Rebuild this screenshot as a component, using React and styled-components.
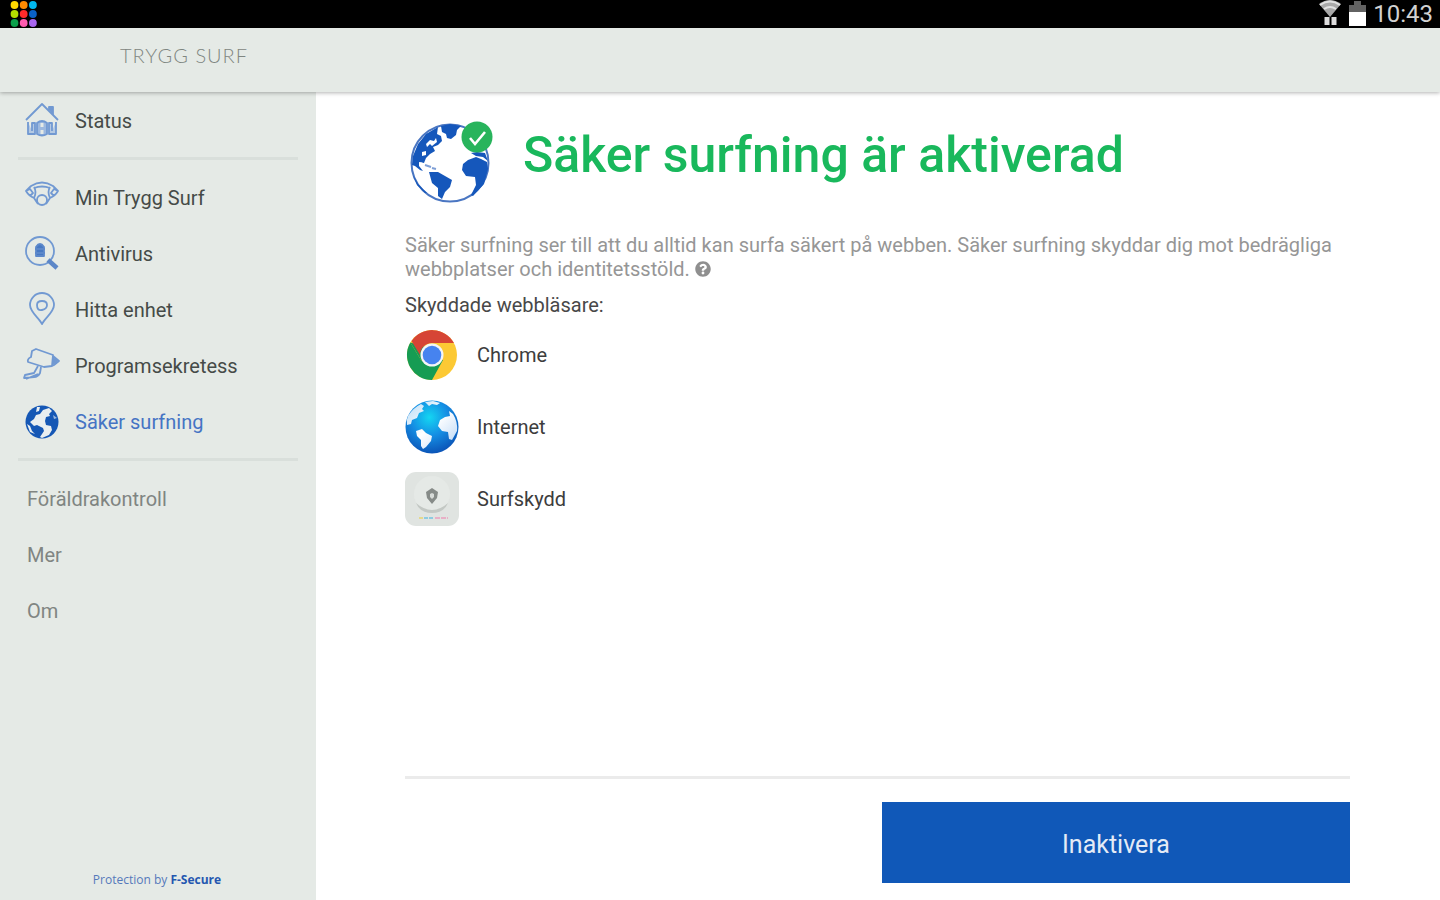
import React from "react";
import styled, { createGlobalStyle } from "styled-components";
import { FaQuestionCircle } from "react-icons/fa";

const GlobalStyle = createGlobalStyle`
  * { box-sizing: border-box; }
  body { margin: 0; font-family: Roboto, "Liberation Sans", sans-serif; color: #3c4240; background: #fff; }
  ul { list-style: none; margin: 0; padding: 0; }
  h1, h2, p { margin: 0; }
`;

const Screen = styled.div`
  display: flex;
  flex-direction: column;
  min-height: 100vh;
`;
const StatusBar = styled.div`
  display: flex;
  align-items: center;
  justify-content: space-between;
  height: 28px;
  padding: 0 7px 0 10px;
  background: #000;
`;
const StatusGroup = styled.div`
  display: flex;
  align-items: center;
  gap: 7px;
  color: #d2d2d2;
  font-size: 24px;
  line-height: 28px;
`;
const Header = styled.header`
  display: flex;
  z-index: 1;
  height: 64px;
  padding: 13px 120px;
  background: #e5eae6;
  box-shadow: 0 1px 4px rgba(0, 0, 0, 0.3);
`;
const Brand = styled.span`
  font-family: Lato, sans-serif;
  font-weight: 300;
  font-size: 20px;
  line-height: 28px;
  letter-spacing: 1px;
  color: #7f8681;
`;
const Body = styled.div`
  display: flex;
  flex: 1;
`;
const Sidebar = styled.nav`
  display: flex;
  flex-direction: column;
  flex: 0 0 316px;
  padding: 1px 18px 12px;
  background: #e5eae6;
`;
const NavList = styled.ul`
  & + & {
    margin-top: 8px;
    padding-top: 10px;
    border-top: 3px solid #d9dfdb;
  }
`;
const NavLink = styled.a`
  display: flex;
  align-items: center;
  gap: 14px;
  height: 56px;
  padding-left: ${(p) => (p.$plain ? 9 : 5)}px;
  font-size: 20px;
  line-height: 28px;
  text-decoration: none;
  color: ${(p) => (p.$active ? "#4574c4" : p.$plain ? "#808582" : "#454b48")};
  svg { flex: none; overflow: visible; }
`;
const Credit = styled.p`
  margin-top: auto;
  padding-right: 2px;
  text-align: center;
  font-family: "Open Sans", sans-serif;
  font-size: 12px;
  line-height: 16px;
  color: #5579bb;
  b { color: #2457b0; }
`;
const Main = styled.main`
  display: flex;
  flex-direction: column;
  flex: 1;
  min-width: 0;
  padding: 29px 90px 17px 89px;
`;
const TitleRow = styled.div`
  display: flex;
  gap: 29px;
  padding-left: 5px;
  svg { flex: none; }
`;
const Title = styled.h1`
  font-size: 50px;
  line-height: 68px;
  font-weight: 500;
  color: #19b85c;
`;
const Intro = styled.p`
  margin-top: 28px;
  font-size: 20px;
  line-height: 24px;
  color: #969696;
`;
const HelpButton = styled.button`
  width: 16px;
  height: 16px;
  padding: 0;
  border: 0;
  background: none;
  color: #8f8f8f;
  vertical-align: -1px;
  svg { display: block; }
`;
const ListHeading = styled.h2`
  margin-top: 10px;
  font-size: 20px;
  line-height: 28px;
  font-weight: 400;
  color: #484848;
`;
const BrowserRow = styled.li`
  display: flex;
  align-items: center;
  gap: 18px;
  height: 72px;
  font-size: 20px;
  color: #3d3d3d;
`;
const Footer = styled.footer`
  display: flex;
  justify-content: flex-end;
  margin-top: auto;
  padding-top: 23px;
  border-top: 3px solid #ebebeb;
`;
const Action = styled.button`
  width: 468px;
  max-width: 100%;
  height: 81px;
  padding: 4px 0 0;
  border: 0;
  background: #1058b8;
  color: #e4ebf6;
  font: 400 25px/32px Roboto, sans-serif;
`;

const DOTS = ["#ffd800", "#ff8a00", "#00b8f0", "#b4e000", "#ff2a2a", "#0a62c8", "#0aa04a", "#ff5cb0", "#a866f0"];

const AppDots = () => (
  <svg width="28" height="28" aria-hidden="true">
    {DOTS.map((c, i) => (
      <circle key={c} cx={4.5 + (i % 3) * 9.2} cy={5 + Math.floor(i / 3) * 9} r="3.9" fill={c} />
    ))}
  </svg>
);
const Wifi = () => (
  <svg width="24" height="28" aria-hidden="true">
    <path d="M1 4Q12-4 23 4L12 17Z" fill="#a9a9a9" />
    <path d="M2 5Q12-2 22 5M6 9Q12 5 18 9" fill="none" stroke="#e2e2e2" strokeWidth="2" />
    <path d="M9 25V17M16 25V17" stroke="#ddd" strokeWidth="5" />
  </svg>
);
const Battery = () => (
  <svg width="17" height="28" aria-hidden="true">
    <path d="M5 1h7v4h5v21H0V5h5z" fill="#626262" />
    <path d="M0 12h17v14H0z" fill="#fff" />
  </svg>
);

const Line = ({ children }) => (
  <svg width="38" height="36" viewBox="0 0 38 36" fill="none" stroke="#7199d2" strokeWidth="1.8" strokeLinejoin="round" aria-hidden="true">
    {children}
  </svg>
);
const HouseIcon = () => (
  <Line>
    <path d="M3 17 19 1 35 17" />
    <path d="M26 7V4h4v8" fill="#7199d2" />
    <path d="M5 19v12h7V20H9v8M33 19v12h-7V20h3v8" fill="#b4c9e3" />
    <path d="M14 20q5-4 10 0v11q-5 3-10 0z" fill="#9db9df" />
    <path d="M19 20v4M19 27v4" stroke="#e5eae6" strokeWidth="3" />
  </Line>
);
const ShieldIcon = () => (
  <Line>
    <path d="M8 6Q19-1 30 6l5 5q-3 5-8 7l-4 6M8 6l-5 5q3 5 8 7l4 6M11 7q3 5 0 11M27 7q-3 5 0 11M11 8q8-3 16 0M3 11l4-2 3 4-3 3M35 11l-4-2-3 4 3 3" />
    <circle cx="19" cy="20" r="5" />
  </Line>
);
const ScanIcon = () => (
  <Line>
    <circle cx="17" cy="15" r="14" />
    <path d="M13 20V11q4-6 8 0v9z" fill="#4779c3" stroke="#5c88ca" />
    <path d="M12 13h10M12 17h10" stroke="#5c88ca" />
    <path d="m25 24 9 8" strokeWidth="4.5" stroke="#5c87c8" />
  </Line>
);
const PinIcon = () => (
  <Line>
    <path d="M19 32C16 26 7 20 7 13a12 12 0 0 1 24 0c0 7-9 13-12 19z" />
    <path d="M14 13q0-4 5-4t5 4-5 5-5-5z" />
  </Line>
);
const CameraIcon = () => (
  <Line>
    <path d="m9 3 4-2 17 6-1 11-8 1-16-5q-1-3 3-5zM30 8l6 5-5 4-2 1" />
    <path d="m30 10 4 3-4 3z" fill="#7199d2" />
    <path d="m15 18-4 7-9 2-1 3 10-1q4 0 6-4l1-6M3 31l12-5" />
  </Line>
);

const GlobeIcon = () => (
  <svg width="38" height="36" aria-hidden="true">
    <circle cx="19" cy="18" r="16.5" fill="#1557b5" />
    <path
      fill="#e9eef0"
      d="M14 3l3 0-1 4-3 1zM20 6l6-2 3 3-3 3 1 2-4 1-1 4 1 4 5 1 1 4-3 5-7 3-2-1 4-6-1-3-6-3-3 1-4-4 4-3 2-4 4-1zM4 20l3 2 2 5 3 3-5-2z"
    />
    <path d="M30 11l4 3-3 1z" fill="#9cb9e0" />
  </svg>
);
const ProtectedGlobe = () => (
  <svg width="84" height="84" aria-hidden="true">
    <g transform="translate(0 2)">
      <circle cx="40" cy="40" r="38.5" fill="#fff" stroke="#4a76c2" strokeWidth="2" />
      <path
        fill="#1557bb"
        d="M2 42 3 33 8 21 16 11 28 4 27 11 31 13 32 18 28 22 23 24 25 28 20 31 16 35 14 40 9 39 9 43 13 48 10 47 5 43ZM31 3 40 1 51 3 47 7 46 12 41 16 37 15 36 11 32 9ZM19 49 28 49 35 53 42 57 40 64 35 69 32 76 28 73 28 65 22 60ZM58 37 66 34 71 36 77 39 78 46 74 61 63 73 61 72 66 62 65 54 56 53 52 47 53 41ZM61 30 67 29 75 30 78 38 73 34 66 33ZM3 52 8 61 17 70 15 70 7 62Z"
      />
      <path d="M16 21l4-4 4 1 2-3 1 4-5 4-2-2-3 3zM12 29l4-1 0 4-4 1zM10 39l3 1-1 3z" fill="#fff" />
      <path d="M15 42l6 2M22 45l4 1" stroke="#7f9fd6" strokeWidth="2" />
    </g>
    <circle cx="67" cy="16" r="15.5" fill="#28b45c" />
    <path d="m60 17 5 6 10-12" fill="none" stroke="#fff" strokeWidth="2.6" />
  </svg>
);
const ChromeIcon = () => (
  <svg width="54" height="54" viewBox="0 0 54 54" aria-hidden="true">
    <circle cx="27" cy="27" r="25" fill="#fcc934" />
    <path d="M5.3 14.5A25 25 0 0 0 27 52L38 32 27 27 16.6 33z" fill="#169c53" />
    <path d="M5.3 14.5 16.6 33 24 20z" fill="#169c53" />
    <path d="M6.5 13A25 25 0 0 1 49 15H27a12 12 0 0 0-12 12z" fill="#d64535" />
    <circle cx="27" cy="27" r="11.5" fill="#f5f5f5" />
    <circle cx="27" cy="27" r="9.3" fill="#4683ef" />
  </svg>
);
const InternetIcon = () => (
  <svg width="54" height="54" viewBox="0 0 54 54" aria-hidden="true">
    <defs>
      <radialGradient id="sea" cx="45%" cy="32%" r="68%">
        <stop offset="0" stopColor="#14d6f2" />
        <stop offset="0.5" stopColor="#158fe4" />
        <stop offset="1" stopColor="#0b55b8" />
      </radialGradient>
      <linearGradient id="land" x1="0" y1="0" x2="1" y2="1">
        <stop offset="0" stopColor="#b9dcf6" />
        <stop offset="0.5" stopColor="#ffffff" />
        <stop offset="1" stopColor="#b5d4f5" />
      </linearGradient>
    </defs>
    <circle cx="27" cy="27" r="26.5" fill="url(#sea)" />
    <path
      fill="url(#land)"
      d="M3 16Q8 8 16 4L19 6 17 9 19 11 14 13 12 18 7 20 6 24 2 25Q1 20 3 16ZM20 2l8-1 7 2-3 2-5-1-3 2zM11 31l6-2 4 4 6 3-1 5-5 6-3 2-2-3 0-6-4-4zM35 20l5-3 5-1-1-5 4 3q5 8 4 17l-5 9-3-1-1-7-6-1-4-5z"
    />
  </svg>
);
const SurfIcon = () => (
  <svg width="54" height="54" viewBox="0 0 54 54" aria-hidden="true">
    <rect width="54" height="54" rx="11" fill="#e0e4e1" />
    <circle cx="27" cy="22" r="18" fill="#e5e9e6" />
    <path d="M11 31q16 14 32 0-4 10-16 10T11 31z" fill="#c3c8c4" />
    <path d="m21 20 6-4 6 4-1 6-5 6-5-6z" fill="#868b88" />
    <path d="m25 22 2-1 2 1v3l-2 2-2-2z" fill="#d7dbd8" />
    <path d="M14 46h4" stroke="#e5d98d" strokeWidth="2" />
    <path d="M19 46h9" stroke="#8ecbe0" strokeWidth="2" strokeDasharray="4 1" />
    <path d="M30 46h13" stroke="#e8b0c6" strokeWidth="2" strokeDasharray="5 1" />
  </svg>
);

const NAV = [
  [{ label: "Status", Icon: HouseIcon }],
  [
    { label: "Min Trygg Surf", Icon: ShieldIcon },
    { label: "Antivirus", Icon: ScanIcon },
    { label: "Hitta enhet", Icon: PinIcon },
    { label: "Programsekretess", Icon: CameraIcon },
    { label: "Säker surfning", Icon: GlobeIcon, active: true },
  ],
  [{ label: "Föräldrakontroll" }, { label: "Mer" }, { label: "Om" }],
];
const BROWSERS = [
  { label: "Chrome", Icon: ChromeIcon },
  { label: "Internet", Icon: InternetIcon },
  { label: "Surfskydd", Icon: SurfIcon },
];

export default function App() {
  return (
    <Screen>
      <GlobalStyle />
      <StatusBar>
        <AppDots />
        <StatusGroup>
          <Wifi />
          <Battery />
          <span>10:43</span>
        </StatusGroup>
      </StatusBar>
      <Header>
        <Brand>TRYGG SURF</Brand>
      </Header>
      <Body>
        <Sidebar>
          {NAV.map((group) => (
            <NavList key={group[0].label}>
              {group.map(({ label, Icon, active }) => (
                <li key={label}>
                  <NavLink href="#" $active={active} $plain={!Icon} aria-current={active ? "page" : undefined}>
                    {Icon && <Icon />}
                    {label}
                  </NavLink>
                </li>
              ))}
            </NavList>
          ))}
          <Credit>
            Protection by <b>F-Secure</b>
          </Credit>
        </Sidebar>
        <Main>
          <TitleRow>
            <ProtectedGlobe />
            <Title>Säker surfning är aktiverad</Title>
          </TitleRow>
          <Intro>
            Säker surfning ser till att du alltid kan surfa säkert på webben. Säker surfning skyddar dig mot bedrägliga
            webbplatser och identitetsstöld.{" "}
            <HelpButton aria-label="Hjälp">
              <FaQuestionCircle size={16} />
            </HelpButton>
          </Intro>
          <ListHeading>Skyddade webbläsare:</ListHeading>
          <ul>
            {BROWSERS.map(({ label, Icon }) => (
              <BrowserRow key={label}>
                <Icon />
                {label}
              </BrowserRow>
            ))}
          </ul>
          <Footer>
            <Action>Inaktivera</Action>
          </Footer>
        </Main>
      </Body>
    </Screen>
  );
}
